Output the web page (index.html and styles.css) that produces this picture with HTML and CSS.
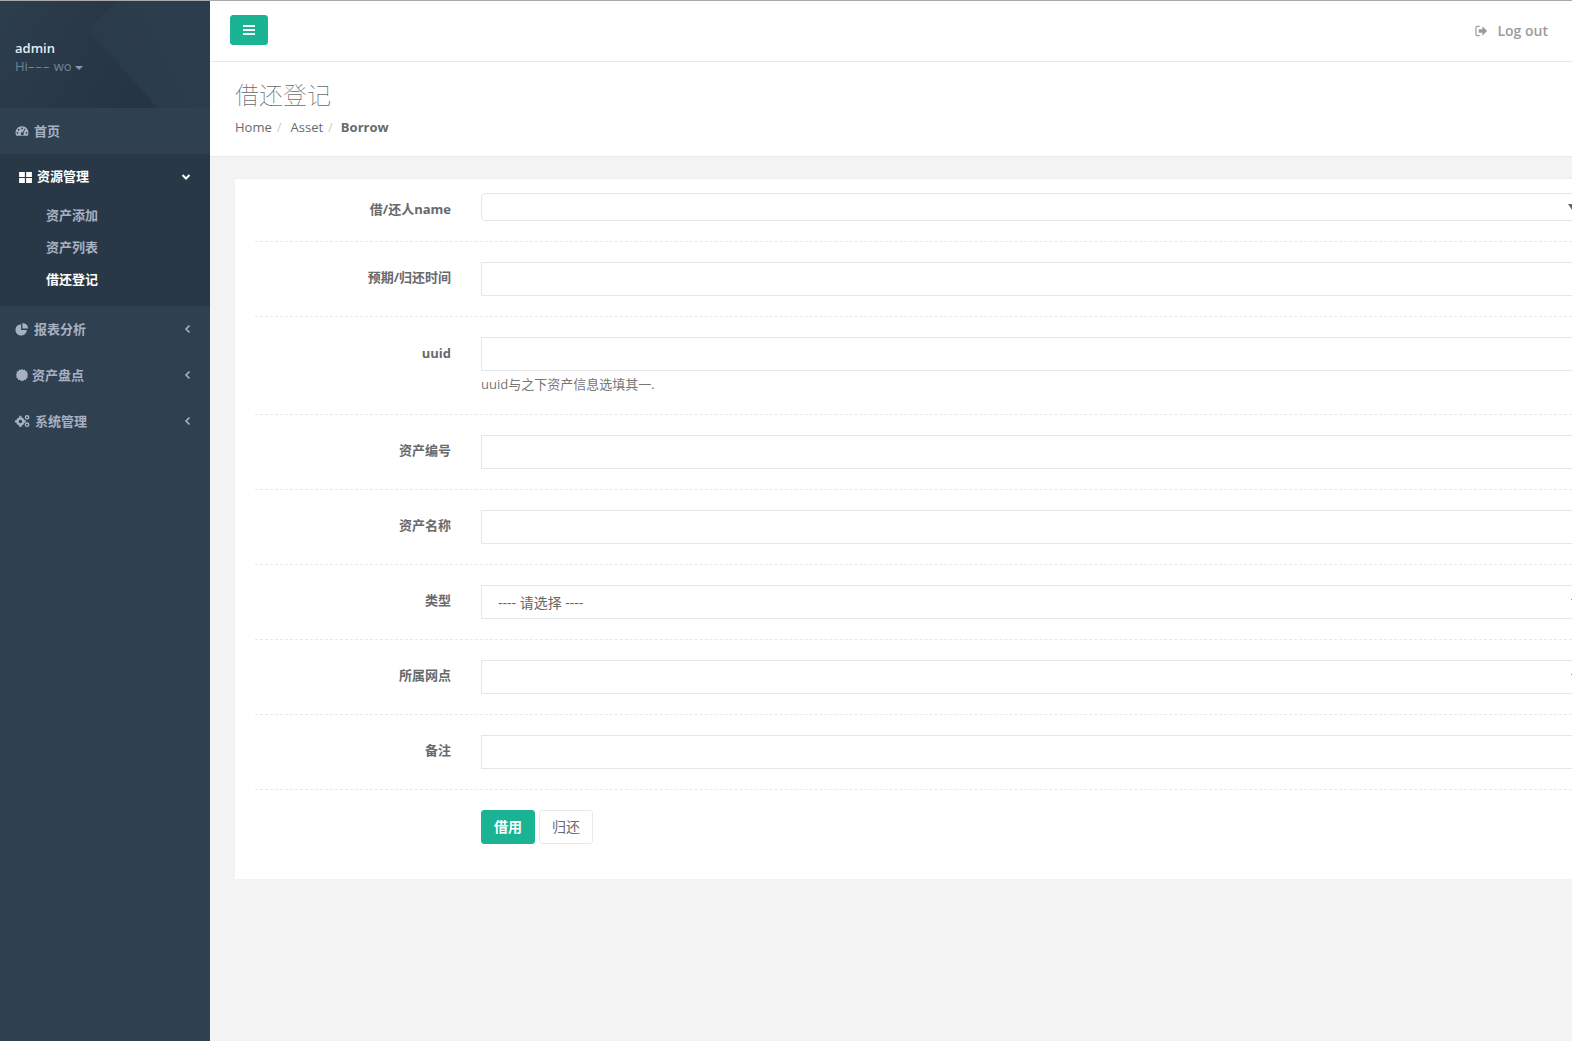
FILE: index.html
```html
<!DOCTYPE html>
<html lang="zh">
<head>
<meta charset="utf-8">
<title>借还登记</title>
<link rel="stylesheet" href="styles.css">
</head>
<body>
<div class="app">
  <aside class="sidebar">
    <div class="profile">
      <svg class="profile-bg" viewBox="0 0 210 107" preserveAspectRatio="none" aria-hidden="true">
        <defs>
          <linearGradient id="shadeLeft" x1="0" y1="0" x2="1" y2="0.4">
            <stop offset="0" stop-color="#2c3d4d"/>
            <stop offset="1" stop-color="#263543"/>
          </linearGradient>
          <linearGradient id="shadeRight" x1="0" y1="0.6" x2="1" y2="0.2">
            <stop offset="0" stop-color="#2a3a49"/>
            <stop offset="1" stop-color="#2c3e4e"/>
          </linearGradient>
        </defs>
        <polygon points="0,0 118,0 88,28 158,107 0,107" fill="url(#shadeLeft)"/>
        <polygon points="118,0 210,0 210,107 158,107 88,28" fill="url(#shadeRight)"/>
      </svg>
      <div class="profile-text">
        <div class="profile-name">admin</div>
        <div class="profile-hi">Hi<span class="dash">–––</span> wo<span class="caret"></span></div>
      </div>
    </div>
    <nav class="nav">
      <a class="nav-item home">
        <svg class="icon" viewBox="0 0 16 16"><path fill-rule="evenodd" d="M8 2.500C3.800 2.500.6 5.800.6 10c0 1.300.3 2.500.9 3.500h13c.6-1 .9-2.200.9-3.500 0-4.200-3.200-7.500-7.400-7.500zM8 4a1 1 0 1 1 0 2 1 1 0 0 1 0-2zM4.200 5.500a1 1 0 1 1 0 2 1 1 0 0 1 0-2zM2.800 9a1 1 0 1 1 0 2 1 1 0 0 1 0-2zm10.400 0a1 1 0 1 1 0 2 1 1 0 0 1 0-2zM11.200 5.200l.8.500-2.400 4.200a1.700 1.700 0 1 1-.9-.5z"/></svg>
        <span class="label">首页</span>
      </a>
      <div class="group">
        <a class="nav-item open">
          <svg class="icon grid-icon" viewBox="0 0 14 12"><path d="M0 0h6.300v5.400H0zM7.700 0H14v5.400H7.700zM0 6.600h6.300V12H0zM7.700 6.600H14V12H7.700z"/></svg>
          <span class="label">资源管理</span>
          <svg class="chev" viewBox="0 0 10 10"><path d="M1.500 3l3.500 3.500L8.500 3" fill="none" stroke="currentColor" stroke-width="2"/></svg>
        </a>
        <a class="sub-item">资产添加</a>
        <a class="sub-item">资产列表</a>
        <a class="sub-item active">借还登记</a>
      </div>
      <a class="nav-item closed">
        <svg class="icon" viewBox="0 0 16 16"><path d="M7 2.500A6.500 6.500 0 1 0 13.500 9H7z"/><path d="M8.500 1v6.500H15A6.500 6.500 0 0 0 8.500 1z"/></svg>
        <span class="label">报表分析</span>
        <svg class="chev" viewBox="0 0 10 10"><path d="M6.500 1.500L3 5l3.500 3.500" fill="none" stroke="currentColor" stroke-width="1.600"/></svg>
      </a>
      <a class="nav-item closed narrow">
        <svg class="icon" viewBox="0 0 16 16"><path d="M8 1l1.500 1.300 1.900-.6.700 1.900 2 .4-.3 2L15 7.500 14 9l.7 1.800-1.800.9-.4 2-2-.2L9 15l-1-.6L7 15l-1.500-1.500-2 .2-.4-2-1.800-.9L2 9 1 7.500 2.200 6l-.3-2 2-.4.700-1.900 1.900.6z"/></svg>
        <span class="label">资产盘点</span>
        <svg class="chev" viewBox="0 0 10 10"><path d="M6.500 1.500L3 5l3.500 3.500" fill="none" stroke="currentColor" stroke-width="1.600"/></svg>
      </a>
      <a class="nav-item closed wide">
        <svg class="icon cogs" viewBox="0 0 18 16"><circle cx="6.500" cy="8.500" r="3.600" fill="none" stroke="currentColor" stroke-width="3"/><path d="M5.200 1.800h2.600v2.400H5.200zM5.200 12.800h2.600v2.400H5.200zM0 7.200h2.400v2.600H0zM10.600 7.200H13v2.600h-2.400z"/><circle cx="14.500" cy="3.600" r="2" fill="none" stroke="currentColor" stroke-width="1.700"/><circle cx="14.500" cy="12.400" r="2" fill="none" stroke="currentColor" stroke-width="1.700"/></svg>
        <span class="label">系统管理</span>
        <svg class="chev" viewBox="0 0 10 10"><path d="M6.500 1.500L3 5l3.500 3.500" fill="none" stroke="currentColor" stroke-width="1.600"/></svg>
      </a>
    </nav>
  </aside>
  <main class="main">
    <header class="topbar">
      <button class="menu-btn" type="button" aria-label="menu">
        <svg viewBox="0 0 12 10" width="12" height="10"><path d="M0 0h12v2H0zM0 4h12v2H0zM0 8h12v2H0z" fill="#fff"/></svg>
      </button>
      <a class="logout">
        <svg viewBox="0 0 14 12" width="13" height="12"><path d="M5 1H2.500A1.500 1.500 0 0 0 1 2.500v7A1.500 1.500 0 0 0 2.500 11H5" fill="none" stroke="currentColor" stroke-width="1.300"/><path d="M4 4h4V1l5 5-5 5V8H4z"/></svg>
        <span>Log out</span>
      </a>
    </header>
    <section class="heading">
      <h2>借还登记</h2>
      <ol class="crumbs">
        <li>Home</li>
        <li class="sep">/</li>
        <li>Asset</li>
        <li class="sep">/</li>
        <li class="current">Borrow</li>
      </ol>
    </section>
    <section class="content">
      <form class="card">
        <div class="row first">
          <label class="field-label">借/还人name</label>
          <div class="select small"><span></span><i class="arrow"></i></div>
        </div>
        <div class="row">
          <label class="field-label">预期/归还时间</label>
          <input class="input" type="text">
        </div>
        <div class="row tall">
          <label class="field-label">uuid</label>
          <div class="field">
            <input class="input" type="text">
            <span class="help">uuid与之下资产信息选填其一.</span>
          </div>
        </div>
        <div class="row">
          <label class="field-label">资产编号</label>
          <input class="input" type="text">
        </div>
        <div class="row">
          <label class="field-label">资产名称</label>
          <input class="input" type="text">
        </div>
        <div class="row">
          <label class="field-label">类型</label>
          <div class="select"><span>---- 请选择 ----</span><i class="arrow"></i></div>
        </div>
        <div class="row">
          <label class="field-label">所属网点</label>
          <div class="select"><span></span><i class="arrow"></i></div>
        </div>
        <div class="row">
          <label class="field-label">备注</label>
          <input class="input" type="text">
        </div>
        <div class="row actions">
          <span></span>
          <div class="buttons">
            <button class="btn primary" type="button">借用</button>
            <button class="btn plain" type="button">归还</button>
          </div>
        </div>
      </form>
    </section>
  </main>
</div>
</body>
</html>
```

FILE: styles.css
```css
* { box-sizing: border-box; }
html, body { margin: 0; height: 100%; overflow: hidden; }
body {
  font-family: "Open Sans", "Noto Sans CJK SC", sans-serif;
  font-size: 13px;
  color: #676a6c;
  background: #f3f3f4;
}
.app {
  display: grid;
  grid-template-columns: 210px 1fr;
  height: 1041px;
  border-top: 1px solid #a7a9aa;
}
.sidebar { background: #2f4050; color: #a7b1c2; display: flex; flex-direction: column; }
.profile { height: 107px; position: relative; background: #2b3c4c; overflow: hidden; }
.profile-bg { position: absolute; inset: 0; width: 100%; height: 100%; }
.profile-text { position: relative; padding: 38px 0 0 15px; }
.profile-name { color: #e6ebf2; font-weight: 600; font-size: 13px; line-height: 18px; }
.profile-hi { color: #71849a; font-size: 13px; line-height: 18px; }
.dash { letter-spacing: 1px; }
.caret {
  display: inline-block;
  margin-left: 3px;
  vertical-align: middle;
  border-top: 4px solid #8a9bb0;
  border-left: 4px solid transparent;
  border-right: 4px solid transparent;
}
.nav { display: flex; flex-direction: column; }
.nav-item {
  display: flex;
  align-items: center;
  height: 46px;
  padding: 0 19px 0 15px;
  font-weight: 600;
  color: #a7b1c2;
}
.nav-item.closed { padding-right: 17px; }
.nav-item.home { background: #2f4050; }
.icon { width: 14px; height: 14px; fill: currentColor; flex: none; }
.label { margin-left: 5px; flex: 1; padding-bottom: 2px; }
.narrow .label { margin-left: 3px; }
.wide .icon { width: 15px; }
.wide .label { margin-left: 5px; }
.chev { width: 10px; height: 10px; flex: none; }
.group { background: #293846; padding-bottom: 11px; }
.nav-item.open { color: #fff; padding-left: 19px; }
.nav-item.open .label { padding-bottom: 4px; }
.grid-icon { width: 13px; height: 11px; }
.sub-item { display: block; height: 32px; line-height: 32px; padding-left: 46px; color: #a7b1c2; font-weight: 600; }
.sub-item:nth-of-type(2) { margin-top: -1px; }
.sub-item.active { color: #fff; font-weight: 700; }
.main { min-width: 0; overflow: hidden; display: flex; flex-direction: column; }
.topbar {
  height: 61px;
  flex: none;
  background: #fff;
  border-bottom: 1px solid #e7eaec;
  display: flex;
  align-items: flex-start;
  justify-content: space-between;
  padding: 14px 24px 0 20px;
}
.menu-btn {
  width: 38px;
  height: 30px;
  border: 1px solid #1ab394;
  border-radius: 3px;
  background: #1ab394;
  display: flex;
  align-items: center;
  justify-content: center;
  padding: 0;
}
.logout { display: flex; align-items: center; gap: 9px; color: #999c9e; font-weight: 600; font-size: 14px; line-height: 20px; margin-top: 6px; }
.logout svg { fill: currentColor; }
.heading {
  height: 95px;
  flex: none;
  background: #fff;
  border-bottom: 1px solid #e7eaec;
  padding: 16px 25px 0;
}
.heading h2 { margin: 0; font-size: 24px; font-weight: 100; line-height: 34px; color: #676a6c; }
.crumbs { list-style: none; display: flex; margin: 6px 0 0; padding: 0; line-height: 18px; }
.crumbs .sep { color: #ccc; margin: 0 9px 0 5px; }
.crumbs li:nth-child(4) { margin-right: 8px; }
.crumbs .current { font-weight: 700; }
.content { padding: 21px 0 0 25px; width: 1372px; }
.card {
  background: #fff;
  padding: 14px 0 35px 20px;
  height: 701px;
  border-top: 1px solid #eceef0;
}
.row {
  display: grid;
  grid-template-columns: 196px 1fr;
  column-gap: 30px;
  padding-bottom: 20px;
  margin-bottom: 20px;
  border-bottom: 1px dashed #e7eaec;
}
.row.tall { padding-bottom: 21px; }
.row.tall .field-label { padding-top: 7px; }
.row.actions { border-bottom: 0; margin: 0; padding: 0; }
.field-label { text-align: right; font-weight: 700; line-height: 18px; padding-top: 6px; }
.first .field-label { padding-top: 7px; }
.input, .select {
  display: block;
  width: 100%;
  height: 34px;
  border: 1px solid #e5e6e7;
  background: #fff;
  padding: 6px 12px;
  outline: 0;
  font: inherit;
}
.select {
  display: flex;
  align-items: center;
  justify-content: space-between;
  padding: 0 2px 0 16px;
  color: #666;
  font-size: 14px;
}
.select.small { height: 28px; border-radius: 4px; padding: 0 5px 0 16px; }
.arrow {
  width: 0;
  height: 0;
  border-top: 6px solid #666;
  border-left: 4.500px solid transparent;
  border-right: 4.500px solid transparent;
}
.field { display: flex; flex-direction: column; }
.help { display: block; margin-top: 4px; line-height: 18px; color: #777; }
.buttons { display: flex; gap: 4px; }
.btn { height: 34px; font: inherit; font-size: 14px; border-radius: 3px; padding: 0 12px 2px; border: 1px solid #e7eaec; }
.btn.primary { background: #1ab394; border-color: #1ab394; color: #fff; font-weight: 700; }
.btn.plain { background: #fff; color: #676a6c; }
```
